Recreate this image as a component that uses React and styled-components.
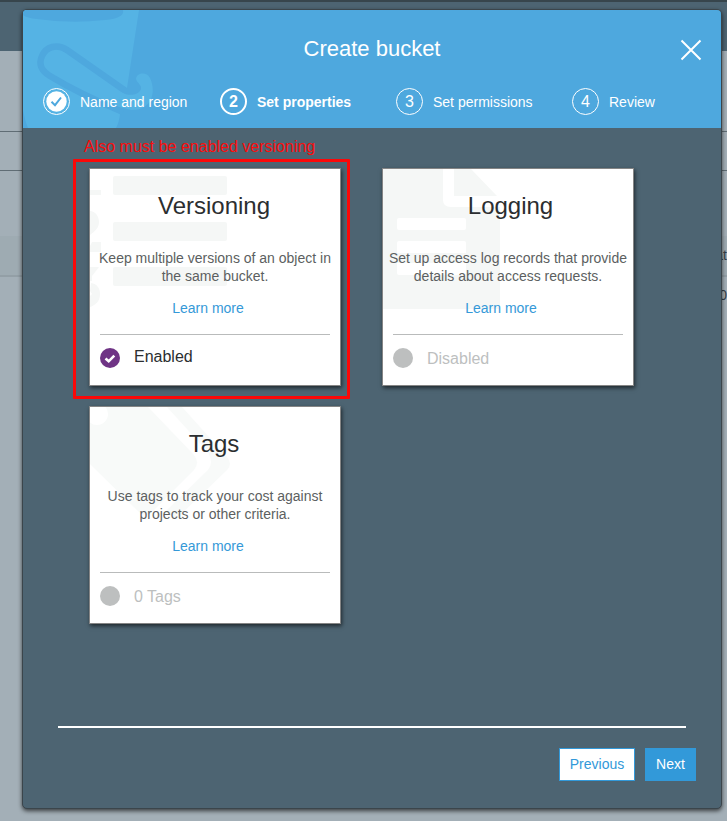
import React from "react";
import styled, { createGlobalStyle } from "styled-components";

const GlobalStyle = createGlobalStyle`
  *, *::before, *::after { box-sizing: border-box; }
  body { margin: 0; overflow: hidden; font-family: "Liberation Sans", Arial, sans-serif; }
  h1, h2, p { margin: 0; font-weight: 400; }
`;

const Screen = styled.div`
  position: relative;
  width: 727px;
  height: 821px;
  padding: 9px 5px 12px 22px;
  background: #a3afb7;
  overflow: hidden;
`;

const Backdrop = styled.div`
  position: absolute;
  inset: 0;
  display: flex;
  flex-direction: column;
`;

const Row = styled.div`
  flex: none;
  height: ${(p) => p.$height}px;
  background: ${(p) => p.$fill || "transparent"};
  border-bottom: ${(p) => (p.$line ? `${p.$thick || 1}px solid ${p.$line}` : "none")};
  overflow: hidden;
  text-align: right;
  white-space: nowrap;
  font-size: 14px;
  line-height: ${(p) => p.$height - 3}px;
  color: #34414a;
`;

const Modal = styled.section`
  position: relative;
  display: flex;
  flex-direction: column;
  width: 700px;
  height: 800px;
  border: 1px solid #3b454b;
  border-radius: 5px;
  background: #4d6472;
  box-shadow: 0 2px 4px rgba(0, 0, 0, 0.65);
  overflow: hidden;
`;

const Header = styled.header`
  position: relative;
  flex: none;
  height: 118px;
  background: #4ea8de;
  color: #fff;
`;

const BucketArt = styled.svg`
  position: absolute;
  left: 0;
  top: 0;
`;

const TitleBar = styled.div`
  position: relative;
  display: grid;
  grid-template-columns: 60px 1fr 60px;
  align-items: center;
  height: 78px;
`;

const Title = styled.h1`
  grid-column: 2;
  font-size: 22px;
  line-height: 26px;
  text-align: center;
`;

const Close = styled.button`
  display: flex;
  width: 22px;
  height: 22px;
  margin: 2px 0 0 19px;
  padding: 0;
  border: 0;
  background: none;
`;

const Steps = styled.nav`
  position: relative;
  display: grid;
  grid-template-columns: 177px 176px 176px 1fr;
  padding-left: 20px;
`;

const Step = styled.div`
  display: flex;
  align-items: center;
  height: 27px;
  gap: 10px;
  font-size: 14px;
  font-weight: ${(p) => (p.$active ? 700 : 400)};
  white-space: nowrap;
`;

const StepBadge = styled.span`
  display: flex;
  flex: none;
  align-items: center;
  justify-content: center;
  width: 27px;
  height: 27px;
  border: ${(p) => (p.$active ? 2 : 1)}px solid #fff;
  border-radius: 50%;
  font-size: 16px;
  line-height: 25px;
`;

const Body = styled.main`
  display: flex;
  flex: 1;
  flex-direction: column;
  padding: 40px 35px 27px;
`;

const Cards = styled.div`
  display: grid;
  grid-template-columns: 252px 252px;
  gap: 20px 41px;
  padding-left: 31px;
`;

const CardSlot = styled.div`
  position: relative;
  height: 218px;
`;

const Card = styled.article`
  position: relative;
  height: 218px;
  padding: 0 10px;
  border: 1px solid #858585;
  background: #fff;
  box-shadow: 1px 2px 4px rgba(0, 0, 0, 0.6);
  overflow: hidden;
`;

const CardArt = styled.svg`
  position: absolute;
  left: 0;
  top: 0;
`;

const CardContent = styled.div`
  position: relative;
  display: flex;
  flex-direction: column;
`;

const CardTitle = styled.h2`
  margin-top: 22px;
  color: #2b2e30;
  font-size: 24px;
  line-height: 30px;
  text-align: center;
  text-indent: ${(p) => p.$shift}px;
`;

const Description = styled.p`
  margin: 28px -10px 0;
  color: #5c5f61;
  font-size: 14px;
  line-height: 18px;
  text-align: center;
  white-space: pre-line;
`;

const LearnMore = styled.a`
  margin: 14px 14px 0 0;
  color: #3599d8;
  font-size: 14px;
  line-height: 18px;
  text-align: center;
`;

const Status = styled.div`
  display: flex;
  align-items: center;
  height: 47px;
  margin-top: 17px;
  border-top: 1px solid #b9bbbb;
  gap: 14px;
`;

const StatusDot = styled.span`
  display: flex;
  align-items: center;
  justify-content: center;
  width: 20px;
  height: 20px;
  border-radius: 50%;
  background: ${(p) => (p.$on ? "#6f3485" : "#bdbfbf")};
`;

const StatusText = styled.span`
  padding: ${(p) => (p.$on ? "0 0 3px" : "2px 0 0")};
  color: ${(p) => (p.$on ? "#2b2e30" : "#bdbfbf")};
  font-size: 16px;
  line-height: 20px;
`;

const Highlight = styled.div`
  position: absolute;
  left: -16px;
  top: -9px;
  width: 277px;
  height: 240px;
  border: 3px solid #fb0808;
  border-radius: 1px;
`;

const Note = styled.span`
  position: absolute;
  left: -5px;
  top: -31px;
  color: #fb0d0d;
  font-size: 16px;
  line-height: 20px;
  white-space: nowrap;
`;

const Footer = styled.footer`
  display: flex;
  justify-content: flex-end;
  gap: 10px;
  margin-top: auto;
  padding: 20px 0 0;
  border-top: 2px solid #fff;
`;

const FooterButton = styled.button`
  width: ${(p) => (p.$primary ? 51 : 76)}px;
  height: 33px;
  margin-right: ${(p) => (p.$primary ? -10 : 0)}px;
  padding: 0 0 2px;
  border: 1px solid #3299d9;
  background: ${(p) => (p.$primary ? "#3299d9" : "#fff")};
  color: ${(p) => (p.$primary ? "#fff" : "#3299d9")};
  font-family: inherit;
  font-size: 14px;
`;

const Bucket = () => (
  <BucketArt width="140" height="118" viewBox="0 0 140 118">
    <path d="M0 0H116L104 78L97 104Q96 113 93 118H5Q2 111 0 100Z" fill="#55b3e4" />
    <path d="M0 0H100Q102 8 82 10Q48 14 14 9Q4 8 0 5Z" fill="#4ea8de" />
    <path d="M104 82L44 40C34 33 23 37 19 46C15 55 19 61 27 66C50 80 76 92 100 102" fill="none" stroke="#4ea8de" strokeWidth="6.5" />
    <path d="M98 82C106 87 116 85 118 79C119 75 114 73 113 69C114 62 124 62 127 68C134 83 128 101 108 100L94 96Z" fill="#55b3e4" />
  </BucketArt>
);

const VersioningArt = () => (
  <CardArt width="250" height="216" viewBox="0 0 250 216" fill="#f5f7f6">
    <rect x="23" y="7" width="114" height="19" rx="2" />
    <rect x="23" y="53" width="114" height="19" rx="2" />
    <rect x="23" y="98" width="114" height="19" rx="2" />
    <path d="M0 21H11V26H0ZM0 42C5 42 9 47 9 53C9 59 5 62 0 66ZM0 77L2 73H11V83H0ZM0 98H9L2 107V112H0ZM1 114C7 115 10 119 10 125C10 132 6 136 0 138V127L2 125L0 122Z" />
  </CardArt>
);

const LoggingArt = () => (
  <CardArt width="250" height="216" viewBox="0 0 250 216">
    <path d="M0 0H60V31Q60 38 68 38H117V140H0Z" fill="#f5f7f6" />
    <path d="M71 0H88L114 27H71Z" fill="#f5f7f6" />
    <g fill="#fff">
      <rect x="14" y="49" width="69" height="12" rx="2" />
      <rect x="14" y="72" width="69" height="34" rx="2" />
    </g>
    <path d="M14 84H83V94H14Z" fill="#f5f7f6" />
  </CardArt>
);

const TagsArt = () => (
  <CardArt width="250" height="216" viewBox="0 0 250 216" fill="#f8faf9">
    <path d="M0 0H58L104 48Q110 56 104 63L62 105Q56 111 49 105L0 57Z" />
    <path d="M77 0H92L137 50Q143 57 137 63L88 110Q81 113 76 104L118 63Q124 56 118 45Z" />
    <circle cx="7" cy="7" r="11" fill="#fff" />
  </CardArt>
);

const steps = ["Name and region", "Set properties", "Set permissions", "Review"];

const cards = [
  { title: "Versioning", shift: -2, text: "Keep multiple versions of an object in\nthe same bucket.", status: "Enabled", on: true, Art: VersioningArt, note: "Also must be enabled versioning" },
  { title: "Logging", shift: 5, text: "Set up access log records that provide\ndetails about access requests.", status: "Disabled", Art: LoggingArt },
  { title: "Tags", shift: -2, text: "Use tags to track your cost against\nprojects or other criteria.", status: "0 Tags", Art: TagsArt },
];

const PropertyCard = ({ title, shift, text, status, on, Art, note }) => (
  <CardSlot>
    <Card>
      <Art />
      <CardContent>
        <CardTitle $shift={shift}>{title}</CardTitle>
        <Description>{text}</Description>
        <LearnMore>Learn more</LearnMore>
        <Status>
          <StatusDot $on={on}>
            {on && (
              <svg width="12" height="12" viewBox="0 0 12 12" fill="none" stroke="#fff" strokeWidth="2.6">
                <path d="M1.5 6.5L4.7 9.3L10.3 3.6" />
              </svg>
            )}
          </StatusDot>
          <StatusText $on={on}>{status}</StatusText>
        </Status>
      </CardContent>
    </Card>
    {note && <Highlight />}
    {note && <Note>{note}</Note>}
  </CardSlot>
);

export default function App() {
  return (
    <Screen>
      <GlobalStyle />
      <Backdrop>
        <Row $height={2} $fill="#37454c" />
        <Row $height={49} $fill="#4d6472" />
        <Row $height={81} $line="#606d75" />
        <Row $height={39} $line="#606d75" />
        <Row $height={65} />
        <Row $height={41} $fill="#9eabb2" $line="#939fa6" $thick={2}>at</Row>
        <Row $height={40}>0</Row>
      </Backdrop>
      <Modal>
        <Header>
          <Bucket />
          <TitleBar>
            <Title>Create bucket</Title>
            <Close aria-label="Close">
              <svg width="22" height="22" viewBox="0 0 22 22" fill="none" stroke="#fff" strokeWidth="2">
                <path d="M1.5 1.5L20.5 20.5M20.5 1.5L1.5 20.5" />
              </svg>
            </Close>
          </TitleBar>
          <Steps>
            {steps.map((label, i) => (
              <Step key={label} $active={i === 1}>
                <StepBadge $active={i === 1}>
                  {i === 0 ? (
                    <svg width="21" height="21" viewBox="0 0 21 21" fill="none">
                      <circle cx="10.5" cy="10.5" r="10.2" fill="#fff" />
                      <path d="M5.5 10.8L9 14.2L15 6.5" stroke="#4ea8de" strokeWidth="2" />
                    </svg>
                  ) : (
                    i + 1
                  )}
                </StepBadge>
                {label}
              </Step>
            ))}
          </Steps>
        </Header>
        <Body>
          <Cards>
            {cards.map((card) => (
              <PropertyCard key={card.title} {...card} />
            ))}
          </Cards>
          <Footer>
            <FooterButton>Previous</FooterButton>
            <FooterButton $primary>Next</FooterButton>
          </Footer>
        </Body>
      </Modal>
    </Screen>
  );
}
